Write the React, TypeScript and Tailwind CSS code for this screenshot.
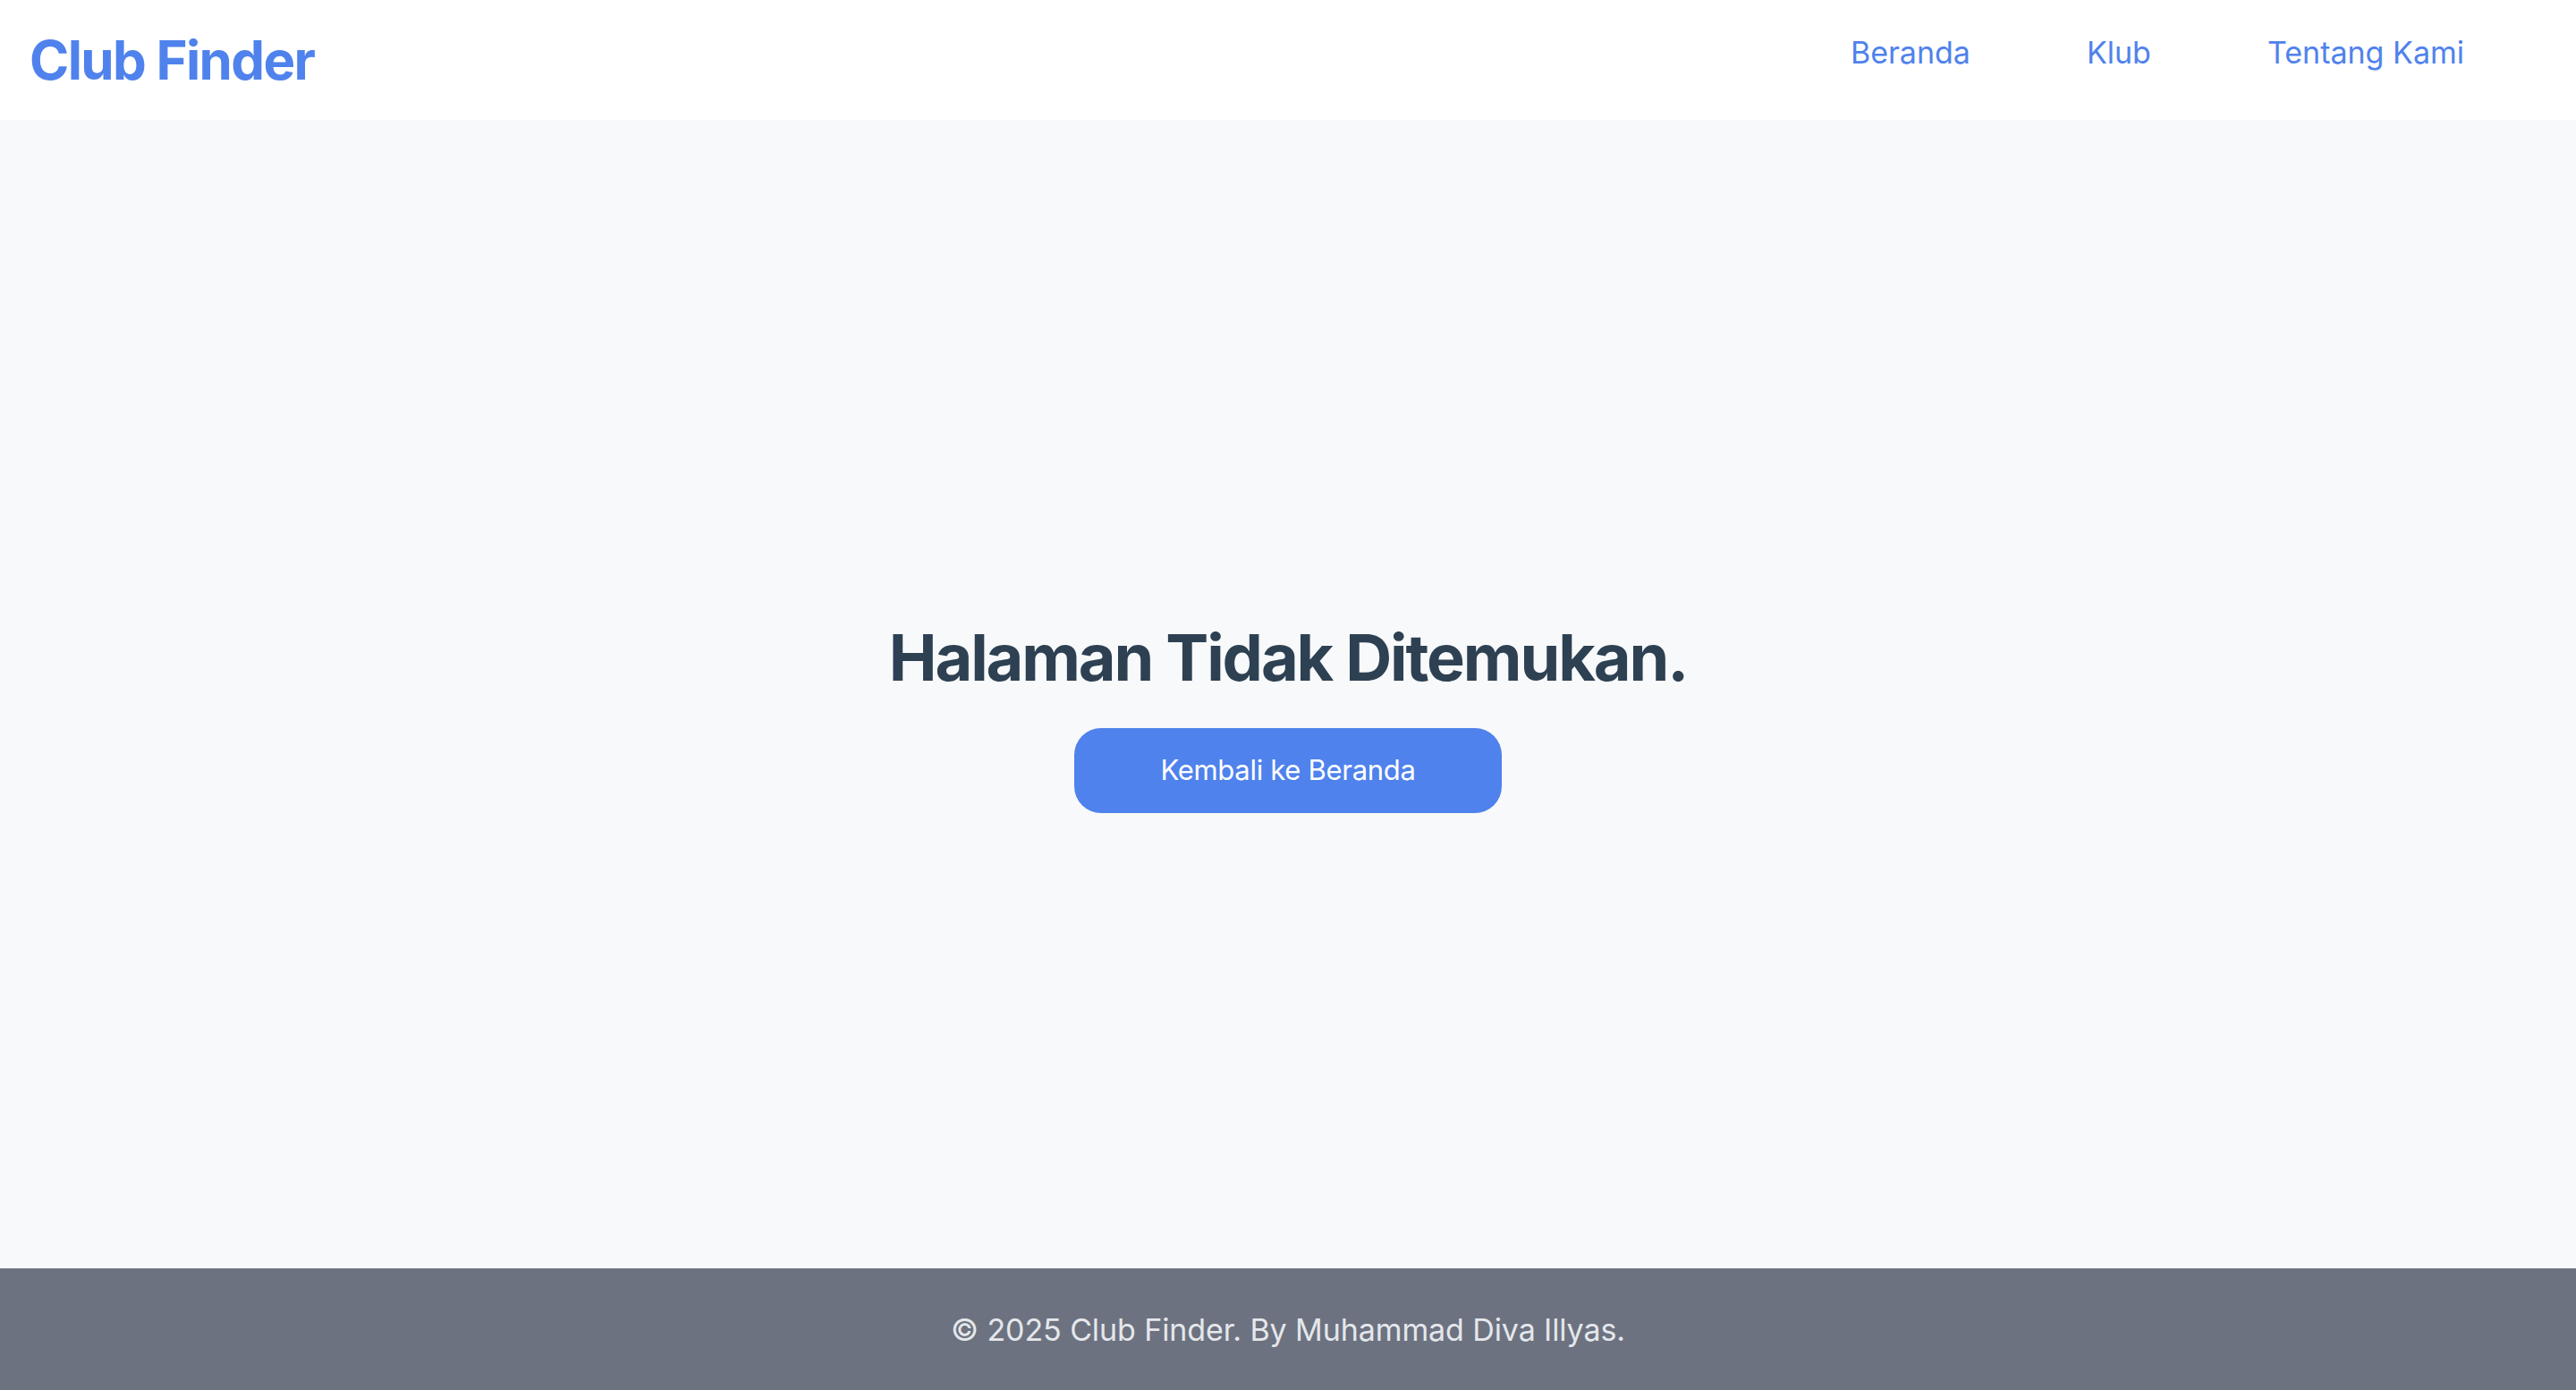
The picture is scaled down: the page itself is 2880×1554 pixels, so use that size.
import React from 'react';

const NavLink: React.FC<{ label: string }> = ({ label }) => (
  <a href="#" className="text-[34px] text-[#4f82ec] leading-none">
    {label}
  </a>
);

export default function App() {
  return (
    <div
      className="min-h-screen flex flex-col bg-[#f8f9fa]"
      style={{ fontFamily: 'Inter, "Noto Sans", sans-serif' }}
    >
      <header className="h-[134px] bg-white flex items-center justify-between pl-[33px] pr-[125px]">
        <h1 className="text-[60px] font-bold text-[#4f82ec] tracking-[-1.7px] leading-none">Club Finder</h1>
        <nav className="flex items-center gap-[130px] mb-[16px]">
          <NavLink label="Beranda" />
          <NavLink label="Klub" />
          <NavLink label="Tentang Kami" />
        </nav>
      </header>

      <main className="flex-1 flex flex-col items-center justify-center pt-[52px]">
        <h2 className="text-[72px] leading-[80px] font-bold text-[#2e4153] tracking-[-2.1px]">
          Halaman Tidak Ditemukan.
        </h2>
        <button className="mt-[39px] h-[95px] w-[478px] rounded-[30px] bg-[#4f82ec] text-white text-[31px] tracking-[-0.3px]">
          Kembali ke Beranda
        </button>
      </main>

      <footer className="h-[136px] bg-[#6c7280] flex items-center justify-center">
        <p className="text-[34px] text-[#e5e7eb] tracking-[-0.1px]">© 2025 Club Finder. By Muhammad Diva Illyas.</p>
      </footer>
    </div>
  );
}
